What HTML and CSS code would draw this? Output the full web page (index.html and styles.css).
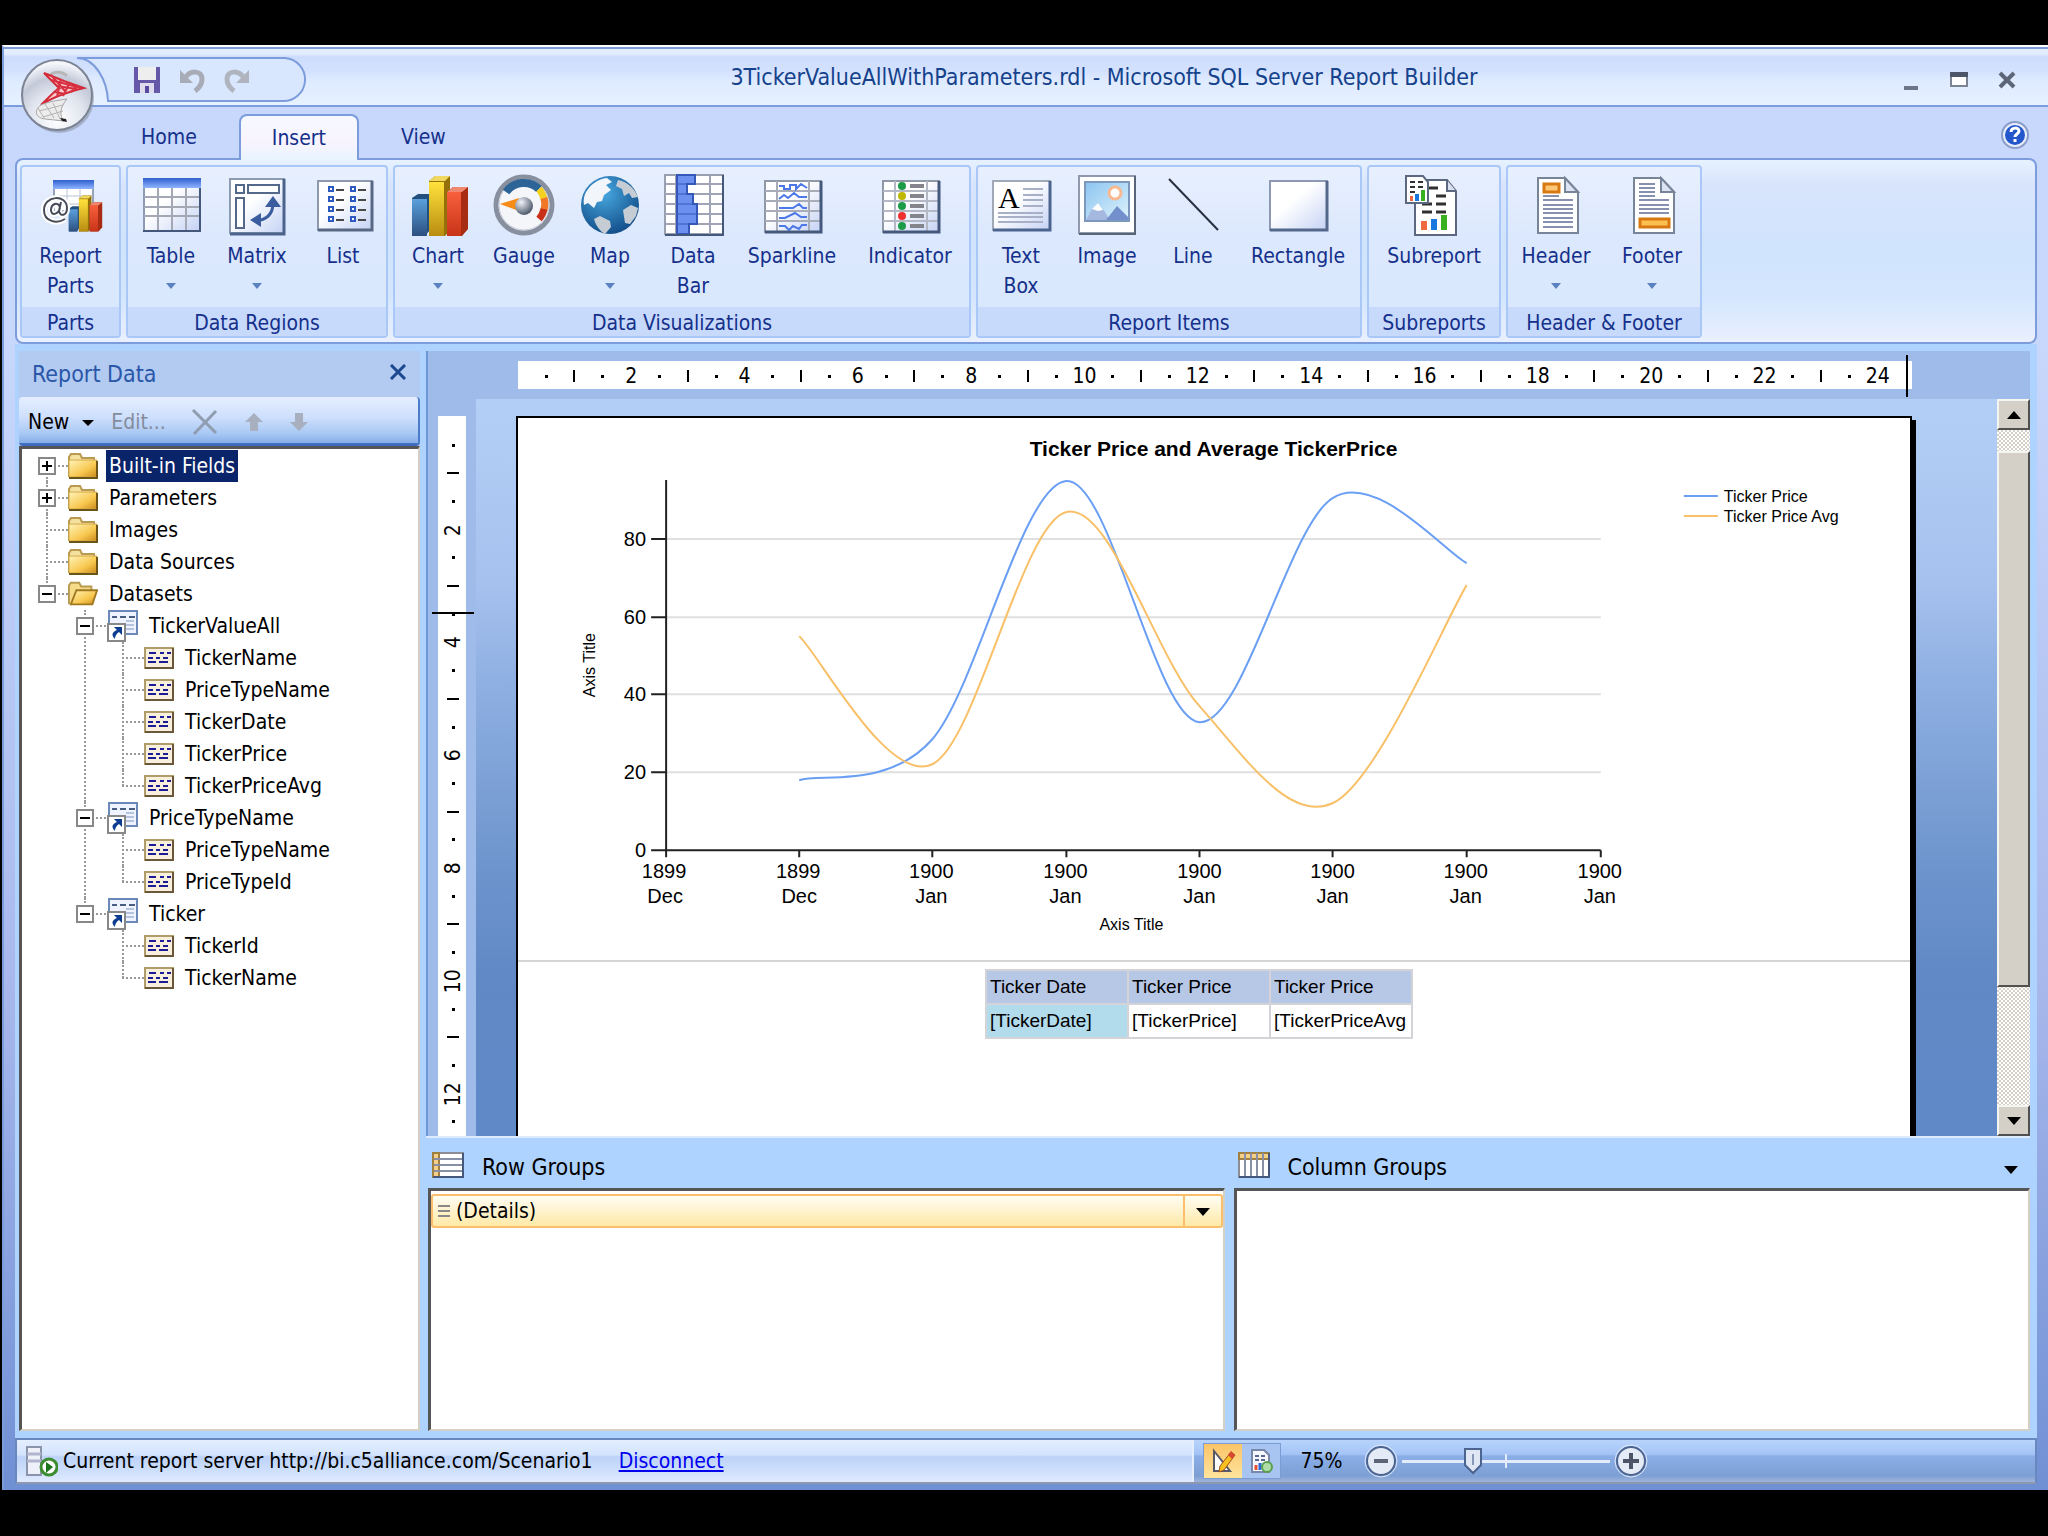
FILE: index.html
```
<!DOCTYPE html>
<html lang="en">
<head>
    <meta charset="UTF-8">
    <meta name="viewport" content="width=device-width, initial-scale=1.0">
    <title>3TickerValueAllWithParameters.rdl - Microsoft SQL Server Report Builder</title>
    <link rel="stylesheet" href="styles.css">
</head>
<body>
    <!-- shared icons -->
    <svg class="defs" aria-hidden="true">
        <defs>
            <linearGradient id="g-blue" x1="0" y1="0" x2="0" y2="1"><stop offset="0" stop-color="#5aa0dc"/><stop offset="1" stop-color="#2c4f80"/></linearGradient>
            <linearGradient id="g-yellow" x1="0" y1="0" x2="0" y2="1"><stop offset="0" stop-color="#ffe23c"/><stop offset="1" stop-color="#b88c10"/></linearGradient>
            <linearGradient id="g-red" x1="0" y1="0" x2="0" y2="1"><stop offset="0" stop-color="#f8603c"/><stop offset="1" stop-color="#c83418"/></linearGradient>
            <linearGradient id="g-head" x1="0" y1="0" x2="0" y2="1"><stop offset="0" stop-color="#2f5fd0"/><stop offset="1" stop-color="#8fb4ff"/></linearGradient>
            <linearGradient id="g-paper" x1="0" y1="0" x2="1" y2="1"><stop offset="0.4" stop-color="#ffffff"/><stop offset="1" stop-color="#c4d2f4"/></linearGradient>
            <linearGradient id="g-folder" x1="0" y1="0" x2="1" y2="1"><stop offset="0" stop-color="#fff3b8"/><stop offset="0.6" stop-color="#f8c850"/><stop offset="1" stop-color="#c88a18"/></linearGradient>
            <linearGradient id="g-sky" x1="0" y1="0" x2="1" y2="1"><stop offset="0" stop-color="#8cc4f0"/><stop offset="1" stop-color="#dff4fc"/></linearGradient>
            <radialGradient id="g-orb" cx="0.5" cy="0.85" r="0.8"><stop offset="0" stop-color="#ffffff"/><stop offset="0.5" stop-color="#dfe4ee"/><stop offset="0.75" stop-color="#c3c9d8"/><stop offset="1" stop-color="#f4f6fa"/></radialGradient>
            <radialGradient id="g-globe" cx="0.4" cy="0.3" r="0.8"><stop offset="0" stop-color="#48a8e0"/><stop offset="1" stop-color="#0c4480"/></radialGradient>
            <radialGradient id="g-ball" cx="0.35" cy="0.3" r="0.8"><stop offset="0" stop-color="#f0f4fa"/><stop offset="1" stop-color="#3a4658"/></radialGradient>
            <symbol id="i-folder" viewBox="0 0 30 26">
                <path d="M1 24V4l2-3h9l2 4h12v4" fill="#f6e2a0" stroke="#b89a50" stroke-width="2"/>
                <path d="M1 7h28v17H1z" fill="url(#g-folder)" stroke="#d0a848" stroke-width="1"/>
                <path d="M29 8v17H1" fill="none" stroke="#6c5418" stroke-width="2"/>
            </symbol>
            <symbol id="i-folder-open" viewBox="0 0 32 26">
                <path d="M1 24V4l2-3h9l2 4h11v5" fill="#f6dc88" stroke="#b89a50" stroke-width="2"/>
                <path d="M3 24l6-15h22l-5 15z" fill="url(#g-folder)" stroke="#a07820" stroke-width="2"/>
            </symbol>
            <symbol id="i-dataset" viewBox="0 0 32 32">
                <path d="M3 1h28v23H3z" fill="#eef3ff" stroke="#6a88b8" stroke-width="2"/>
                <path d="M6 7h5m3 0h6m3 0h6" stroke="#4a5e84" stroke-width="2"/>
                <path d="M20 11h8M20 15h8M20 19h8" stroke="#b4c4e0" stroke-width="2"/>
                <path d="M2 14h17v17H2z" fill="#fff" stroke="#888" stroke-width="2"/>
                <path d="M8 17h8v8l-3-3c-3 2-4 4-4 7-4-4-3-7 2-9z" fill="#0c3c90"/>
            </symbol>
            <symbol id="i-field" viewBox="0 0 30 22">
                <path d="M1 1h28v20H1z" fill="#f8f0dc" stroke="#b09c68" stroke-width="2"/>
                <path d="M29 1v20H1" fill="none" stroke="#6c5838" stroke-width="2"/>
                <path d="M5 6h7m4 0h4m3 0h4M4 11h5m3 0h4m3 0h5M4 15h8m3 0h9" stroke="#1c1c98" stroke-width="2"/>
            </symbol>
            <symbol id="i-bars" viewBox="0 0 58 62">
                <path d="M1 23l6-4h12v36l-5 6H1z" fill="#24507e"/><path d="M1 24h15v37H1z" fill="url(#g-blue)"/>
                <path d="M18 6l6-5h15v54l-5 6H18z" fill="#937008"/><path d="M18 7h15v54H18z" fill="url(#g-yellow)"/><path d="M18 6l6-5h15l-5 5z" fill="#f0d860"/>
                <path d="M36 17l6-5h15v42l-6 7H36z" fill="#a82c14"/><path d="M36 17h14v44H36z" fill="url(#g-red)"/><path d="M36 17l6-5h15l-6 5z" fill="#f08870"/>
            </symbol>
        </defs>
    </svg>

    <div class="window">
        <header class="titlebar">
            <button class="orb" type="button" aria-label="Report Builder menu">
                <svg viewBox="0 0 74 76" width="74" height="76">
                    <circle cx="38" cy="40" r="35" fill="#8c96a8" opacity="0.6"/>
                    <circle cx="36" cy="37" r="35" fill="url(#g-orb)" stroke="#7c8494" stroke-width="2"/>
                    <path d="M28 18c6-6 14-4 18 0" fill="none" stroke="#b8b8b8" stroke-width="3"/>
                    <path d="M23 15l20 8 20 7c-12 3-30 8-43 17 10-10 17-17 18-17-4-4-9-9-15-15z" fill="#f6c8cc" stroke="#d42a38" stroke-width="2"/>
                    <path d="M30 17l14 16M40 21l-4 18M49 24l-7 14M56 27l-6 7M30 22l30 8M36 28l20 3M34 34l10 2" stroke="#d83040" stroke-width="2"/>
                    <path d="M20 47c-8 6-5 13 4 14l19 2c-5-5-4-14 3-22-8 1-20 3-26 6z" fill="#ececec" stroke="#a4a4a4" stroke-width="1"/>
                    <path d="M17 50l6 10M24 46l9 14M32 45l7 16M18 53l24-6M22 59l20-6" stroke="#b4b4b4" stroke-width="1"/>
                    <path d="M39 60l6 1 1 3-5-1z" fill="#222"/>
                </svg>
            </button>
            <div class="quick">
                <svg class="quick-shape" viewBox="0 0 230 46" width="230" height="46" preserveAspectRatio="none">
                    <path d="M0 1c18 0 30 22 31 43h174a21 21 0 0 0 3-43z" fill="#d8e6fe" stroke="#7c9cdc" stroke-width="2"/>
                </svg>
                <button type="button" aria-label="Save">
                    <svg viewBox="0 0 28 28" width="28" height="28"><path d="M1 1h26v26H1z" fill="#6658a8"/><path d="M5 1h18v13H5z" fill="#eee"/><path d="M7 17h14v10H7z" fill="#dcdcec"/><path d="M12 20h4v7h-4z" fill="#5848a0"/></svg>
                </button>
                <button type="button" aria-label="Undo">
                    <svg viewBox="0 0 28 28" width="28" height="28"><path d="M7 12c5-8 17-8 17 1 0 6-3 9-7 12" fill="none" stroke="#a8acb6" stroke-width="5"/><path d="M2 4v13h13z" fill="#a8acb6"/></svg>
                </button>
                <button type="button" aria-label="Redo">
                    <svg viewBox="0 0 28 28" width="28" height="28"><path d="M21 12c-5-8-17-8-17 1 0 6 3 9 7 12" fill="none" stroke="#b0b4be" stroke-width="5"/><path d="M26 4v13H13z" fill="#b0b4be"/></svg>
                </button>
            </div>
            <h1>3TickerValueAllWithParameters.rdl - Microsoft SQL Server Report Builder</h1>
            <div class="window-buttons">
                <button type="button" aria-label="Minimize"><svg viewBox="0 0 20 20" width="20" height="20"><path d="M3 16h14v4H3z" fill="#6c7688"/></svg></button>
                <button type="button" aria-label="Maximize"><svg viewBox="0 0 20 20" width="20" height="20"><path d="M2 4h16v12H2z" fill="#fff" stroke="#7c8494" stroke-width="2"/><path d="M1 2h18v5H1z" fill="#4c5668"/></svg></button>
                <button type="button" aria-label="Close"><svg viewBox="0 0 20 20" width="20" height="20"><path d="M3 3l14 14M17 3L3 17" stroke="#5c6678" stroke-width="4"/></svg></button>
            </div>
        </header>

        <nav class="tabs">
            <button class="tab" type="button">Home</button>
            <button class="tab active" type="button">Insert</button>
            <button class="tab" type="button">View</button>
            <button class="help" type="button" aria-label="Help">
                <svg viewBox="0 0 28 28" width="28" height="28"><circle cx="14" cy="14" r="13" fill="#e8eefc" stroke="#8a9cc8" stroke-width="2"/><circle cx="14" cy="14" r="10" fill="#2456cc"/><path d="M10 11c0-5 8-5 8-1 0 3-4 3-4 6M14 18v3" fill="none" stroke="#fff" stroke-width="3"/></svg>
            </button>
        </nav>

        <div class="ribbon">
            <section class="group">
                <div class="tools">
                    <button class="tool w-parts" type="button">
                        <svg viewBox="0 0 64 64" width="64" height="64">
                            <path d="M15 7h39v30H15z" fill="#fff" stroke="#94a2bc" stroke-width="2"/><path d="M14 6h41v9H14z" fill="url(#g-head)"/><path d="M15 22h39M15 30h39M28 15v22M41 15v22" stroke="#b8c2d4"/>
                            <svg x="28" y="21" width="37" height="37"><use href="#i-bars" width="37" height="37"/></svg>
                            <path d="M26 45c-8 5-21 3-21-9 0-15 23-16 23-2 0 8-7 9-8 3l2-9M21 33c-2-6-9-3-9 3s7 5 9-2" fill="none" stroke="#fff" stroke-width="6"/>
                            <path d="M26 45c-8 5-21 3-21-9 0-15 23-16 23-2 0 8-7 9-8 3l2-9M21 33c-2-6-9-3-9 3s7 5 9-2" fill="none" stroke="#484c58" stroke-width="2"/>
                        </svg>
                        <span>Report<br>Parts</span>
                    </button>
                </div>
                <h2>Parts</h2>
            </section>

            <section class="group">
                <div class="tools">
                    <button class="tool" type="button">
                        <svg viewBox="0 0 64 64" width="64" height="64">
                            <path d="M5 5h56v52H5z" fill="url(#g-paper)" stroke="#8c9ab4" stroke-width="2"/><path d="M4 4h58v10H4z" fill="url(#g-head)"/><path d="M5 23h56M5 33h56M5 42h56M19 14v42M33 14v42M47 14v42" stroke="#a4a8b4" stroke-width="2"/><path d="M61 14v43H4" fill="none" stroke="#44587c" stroke-width="2"/>
                        </svg>
                        <span>Table</span><i class="drop"></i>
                    </button>
                    <button class="tool" type="button">
                        <svg viewBox="0 0 64 64" width="64" height="64">
                            <path d="M5 5h54v54H5z" fill="url(#g-paper)" stroke="#8c9ab4" stroke-width="2"/><path d="M59 5v55H5" fill="none" stroke="#4c648c" stroke-width="3"/>
                            <path d="M11 11h8v8h-8zM23 11h31v8H23zM11 24h8v30h-8z" fill="#fff" stroke="#54688c" stroke-width="2"/>
                            <path d="M30 47c12-1 18-7 18-18" fill="none" stroke="#3c5ca0" stroke-width="3"/><path d="M48 22l8 11H40zM25 46l11-7v14z" fill="#3c5ca0"/>
                        </svg>
                        <span>Matrix</span><i class="drop"></i>
                    </button>
                    <button class="tool" type="button">
                        <svg viewBox="0 0 64 64" width="64" height="64">
                            <path d="M7 7h54v49H7z" fill="url(#g-paper)" stroke="#8c98ac" stroke-width="2"/><path d="M61 7v49H7" fill="none" stroke="#586884" stroke-width="3"/>
                            <path d="M18 13h4v4h-4zM40 13h4v4h-4zM18 23h4v4h-4zM40 23h4v4h-4zM18 33h4v4h-4zM40 33h4v4h-4zM18 43h4v4h-4zM40 43h4v4h-4z" fill="#fff" stroke="#2c5ac0" stroke-width="2"/>
                            <path d="M25 16h8M47 16h8M25 26h8M47 26h8M25 36h8M47 36h8M25 46h8M47 46h8" stroke="#484848" stroke-width="2"/>
                        </svg>
                        <span>List</span>
                    </button>
                </div>
                <h2>Data Regions</h2>
            </section>

            <section class="group">
                <div class="tools">
                    <button class="tool" type="button">
                        <svg viewBox="0 0 64 64" width="64" height="64"><use href="#i-bars" x="5" y="1" width="58" height="62"/></svg>
                        <span>Chart</span><i class="drop"></i>
                    </button>
                    <button class="tool" type="button">
                        <svg viewBox="0 0 64 64" width="64" height="64">
                            <circle cx="32" cy="31" r="28" fill="#f4f6fa" stroke="#8890a0" stroke-width="5"/><circle cx="32" cy="31" r="25" fill="none" stroke="#c8ccd8" stroke-width="1"/>
                            <path d="M14 18a22 22 0 0 1 33-3" fill="none" stroke="#2c6498" stroke-width="8"/>
                            <path d="M47 15a22 22 0 0 1 5 10" fill="none" stroke="#f4d020" stroke-width="7"/><path d="M52 24a22 22 0 0 1 0 12" fill="none" stroke="#f07828" stroke-width="7"/><path d="M52 35a22 22 0 0 1-5 10" fill="none" stroke="#c83018" stroke-width="7"/>
                            <path d="M8 30l19-6v13z" fill="#f88c18"/><circle cx="32" cy="32" r="9" fill="url(#g-ball)"/>
                        </svg>
                        <span>Gauge</span>
                    </button>
                    <button class="tool" type="button">
                        <svg viewBox="0 0 64 64" width="64" height="64">
                            <circle cx="32" cy="31" r="29" fill="url(#g-globe)"/>
                            <path d="M8 18c5-8 12-13 21-14l5 4-6 3 5 5-7 5-2 6-5 1-3 6-6-5-4 2c-1-5 0-9 2-13z" fill="#f2f6fa"/>
                            <path d="M16 45l6-3 10 5 1 6-6 7c-5-3-9-8-11-15zM40 6c10 2 16 8 20 17l-6 1-3-5-5 3-2-7-6-3zM45 36l8-5 7 3-2 8-6 8-5-1z" fill="#c6ccd4"/>
                        </svg>
                        <span>Map</span><i class="drop"></i>
                    </button>
                    <button class="tool w-data" type="button">
                        <svg viewBox="0 0 64 64" width="64" height="64">
                            <path d="M4 1h58v59H4z" fill="#fff" stroke="#98a0b0" stroke-width="2"/><path d="M4 10h58M4 20h58M4 30h58M4 40h58M4 50h58M15 1v59M49 1v59" stroke="#a0a4b4" stroke-width="2"/>
                            <path d="M16 1h18v9h-8v10h6v10h4v20h-8v10H16z" fill="#6c90f0" stroke="#3458b8" stroke-width="2"/><path d="M16 10h10M16 20h10M16 30h16M16 40h20M16 50h12" stroke="#3458b8"/><path d="M62 1v60H4" fill="none" stroke="#44587c" stroke-width="2"/>
                        </svg>
                        <span>Data<br>Bar</span>
                    </button>
                    <button class="tool w-wide" type="button">
                        <svg viewBox="0 0 64 64" width="64" height="64">
                            <path d="M5 7h56v51H5z" fill="url(#g-paper)" stroke="#9098a8" stroke-width="2"/><path d="M5 17h56M5 27h56M5 37h56M5 47h56M17 7v51M49 7v51" stroke="#a8acb8" stroke-width="2"/>
                            <path d="M19 12h5v3h6v-4h6v4l5-5 6 4M19 25l5-4 4 3 6-5 5 4h8M19 34h14l6-4 4 4h4M19 44h6l10-5 6 4h6M19 52h6l4 4 4-4 6 3 3-4h5" fill="none" stroke="#4c78e8" stroke-width="2"/><path d="M61 7v51H5" fill="none" stroke="#44587c" stroke-width="3"/>
                        </svg>
                        <span>Sparkline</span>
                    </button>
                    <button class="tool w-wide" type="button">
                        <svg viewBox="0 0 64 64" width="64" height="64">
                            <path d="M5 7h56v51H5z" fill="url(#g-paper)" stroke="#9098a8" stroke-width="2"/><path d="M5 17h56M5 27h56M5 37h56M5 47h56M17 7v51M49 7v51" stroke="#b4b8c4" stroke-width="2"/>
                            <path d="M32 12h14M32 22h14M32 32h14M32 42h14M32 52h14" stroke="#84848c" stroke-width="4"/>
                            <g fill="#1c9c48"><circle cx="24" cy="12" r="4"/><circle cx="24" cy="32" r="4"/><circle cx="24" cy="52" r="4"/></g><circle cx="24" cy="22" r="4" fill="#c0b800"/><circle cx="24" cy="42" r="4" fill="#f03030"/><path d="M61 7v51H5" fill="none" stroke="#44587c" stroke-width="3"/>
                        </svg>
                        <span>Indicator</span>
                    </button>
                </div>
                <h2>Data Visualizations</h2>
            </section>

            <section class="group">
                <div class="tools">
                    <button class="tool" type="button">
                        <svg viewBox="0 0 64 64" width="64" height="64">
                            <path d="M4 7h57v49H4z" fill="url(#g-paper)" stroke="#a0a8b8" stroke-width="2"/><path d="M61 7v49H4" fill="none" stroke="#4c6490" stroke-width="3"/>
                            <path d="M34 15h20M34 21h20M34 26h20M34 32h20M9 39h45M9 43h45M9 48h45" stroke="#a8b0c8" stroke-width="2"/>
                            <text class="glyph-a" x="9" y="34">A</text>
                        </svg>
                        <span>Text<br>Box</span>
                    </button>
                    <button class="tool" type="button">
                        <svg viewBox="0 0 64 64" width="64" height="64">
                            <path d="M4 2h56v57H4z" fill="#fff" stroke="#909aac" stroke-width="2"/><path d="M60 2v58H4" fill="none" stroke="#586478" stroke-width="2"/>
                            <path d="M10 8h44v39H10z" fill="url(#g-sky)" stroke="#7c98bc" stroke-width="2"/><circle cx="40" cy="19" r="6" fill="#fff" stroke="#f8b890" stroke-width="3"/>
                            <path d="M11 46l6-11 6-6 7 9 5 8z" fill="#a4b8e0"/><path d="M31 46l11-14 11 11v3z" fill="#7490cc"/><path d="M17 35l6-6 5 7-5 1z" fill="#fff"/>
                        </svg>
                        <span>Image</span>
                    </button>
                    <button class="tool" type="button">
                        <svg viewBox="0 0 64 64" width="64" height="64"><path d="M8 5l49 51" stroke="#283040" stroke-width="2"/></svg>
                        <span>Line</span>
                    </button>
                    <button class="tool w-rect" type="button">
                        <svg viewBox="0 0 64 64" width="64" height="64"><path d="M4 7h57v49H4z" fill="url(#g-paper)" stroke="#8c98b4" stroke-width="2"/><path d="M61 7v49H4" fill="none" stroke="#54688c" stroke-width="3"/></svg>
                        <span>Rectangle</span>
                    </button>
                </div>
                <h2>Report Items</h2>
            </section>

            <section class="group">
                <div class="tools">
                    <button class="tool w-sub" type="button">
                        <svg viewBox="0 0 64 64" width="64" height="64">
                            <path d="M13 6h32l9 11v44H13z" fill="#fff" stroke="#5c6880" stroke-width="2"/><path d="M45 6v11h9" fill="#d8e0f0" stroke="#5c6880" stroke-width="2"/>
                            <path d="M27 14h9M34 22h10M34 30h10M20 38h10M34 38h10M20 30h10" stroke="#303030" stroke-width="3"/>
                            <path d="M19 47h6v9h-6z" fill="#f06840"/><path d="M29 45h6v11h-6z" fill="#1878e0"/><path d="M39 41h6v15h-6z" fill="#38b020"/>
                            <path d="M4 2h17l5 6v21H4z" fill="#fff" stroke="#5c6880" stroke-width="2"/><path d="M8 8h5m3 0h5M8 13h5m3 0h5M8 18h5" stroke="#303030" stroke-width="2"/>
                            <path d="M8 22h3v5H8z" fill="#f06840"/><path d="M13 20h4v7h-4z" fill="#1878e0"/><path d="M19 16h4v11h-4z" fill="#38b020"/>
                        </svg>
                        <span>Subreport</span>
                    </button>
                </div>
                <h2>Subreports</h2>
            </section>

            <section class="group">
                <div class="tools">
                    <button class="tool w-foot" type="button">
                        <svg viewBox="0 0 64 64" width="64" height="64">
                            <path d="M14 4h27l13 14v41H14z" fill="#fff" stroke="#788498" stroke-width="2"/><path d="M41 4v14h13z" fill="#dce4f4" stroke="#788498" stroke-width="2"/>
                            <path d="M19 22h16M19 26h30M19 31h30M19 35h30M19 39h30M19 44h30M19 48h30M19 53h30" stroke="#8890b0" stroke-width="2"/><path d="M20 10h15v8H20z" fill="#fcc878" stroke="#d87810" stroke-width="3"/>
                        </svg>
                        <span>Header</span><i class="drop"></i>
                    </button>
                    <button class="tool w-foot" type="button">
                        <svg viewBox="0 0 64 64" width="64" height="64">
                            <path d="M14 4h27l13 14v41H14z" fill="#fff" stroke="#788498" stroke-width="2"/><path d="M41 4v14h13z" fill="#dce4f4" stroke="#788498" stroke-width="2"/>
                            <path d="M19 10h16M19 14h16M19 18h16M19 22h16M19 26h30M19 31h30M19 35h30M19 39h30" stroke="#8890b0" stroke-width="2"/><path d="M20 45h29v8H20z" fill="#fcc050" stroke="#d87810" stroke-width="3"/>
                        </svg>
                        <span>Footer</span><i class="drop"></i>
                    </button>
                </div>
                <h2>Header &amp; Footer</h2>
            </section>
        </div>

        <main class="content">
            <aside class="report-data">
                <div class="panel-title">
                    <h2>Report Data</h2>
                    <button type="button" aria-label="Close panel"><svg viewBox="0 0 18 16" width="18" height="16"><path d="M2 1l14 14M16 1L2 15" stroke="#1c4890" stroke-width="3"/></svg></button>
                </div>
                <div class="panel-tools">
                    <button type="button">New<i class="arrow"></i></button>
                    <button type="button" disabled>Edit...</button>
                    <button type="button" aria-label="Delete" disabled><svg viewBox="0 0 28 28" width="28" height="28"><path d="M2 2l23 23M25 3L3 26" stroke="#909cb0" stroke-width="3"/></svg></button>
                    <button type="button" aria-label="Move up" disabled><svg viewBox="0 0 20 20" width="20" height="20"><path d="M10 1l9 9h-5v9H6v-9H1z" fill="#a8b0c0"/></svg></button>
                    <button type="button" aria-label="Move down" disabled><svg viewBox="0 0 20 20" width="20" height="20"><path d="M10 19l9-9h-5V1H6v9H1z" fill="#a8b0c0"/></svg></button>
                </div>
                <div class="tree">
                    <ul>
                        <li><div class="row"><button class="toggle closed" type="button" aria-label="Expand Built-in Fields"></button><svg class="folder"><use href="#i-folder"/></svg><span class="selected">Built-in Fields</span></div></li>
                        <li><div class="row"><button class="toggle closed" type="button" aria-label="Expand Parameters"></button><svg class="folder"><use href="#i-folder"/></svg><span>Parameters</span></div></li>
                        <li><div class="row leaf"><svg class="folder"><use href="#i-folder"/></svg><span>Images</span></div></li>
                        <li><div class="row leaf"><svg class="folder"><use href="#i-folder"/></svg><span>Data Sources</span></div></li>
                        <li><div class="row"><button class="toggle" type="button" aria-label="Collapse Datasets"></button><svg class="folder"><use href="#i-folder-open"/></svg><span>Datasets</span></div>
                            <ul>
                                <li><div class="row"><button class="toggle" type="button" aria-label="Collapse TickerValueAll"></button><svg class="dataset"><use href="#i-dataset"/></svg><span>TickerValueAll</span></div>
                                    <ul>
                                        <li><div class="row leaf"><svg class="field"><use href="#i-field"/></svg><span>TickerName</span></div></li>
                                        <li><div class="row leaf"><svg class="field"><use href="#i-field"/></svg><span>PriceTypeName</span></div></li>
                                        <li><div class="row leaf"><svg class="field"><use href="#i-field"/></svg><span>TickerDate</span></div></li>
                                        <li><div class="row leaf"><svg class="field"><use href="#i-field"/></svg><span>TickerPrice</span></div></li>
                                        <li><div class="row leaf"><svg class="field"><use href="#i-field"/></svg><span>TickerPriceAvg</span></div></li>
                                    </ul>
                                </li>
                                <li><div class="row"><button class="toggle" type="button" aria-label="Collapse PriceTypeName"></button><svg class="dataset"><use href="#i-dataset"/></svg><span>PriceTypeName</span></div>
                                    <ul>
                                        <li><div class="row leaf"><svg class="field"><use href="#i-field"/></svg><span>PriceTypeName</span></div></li>
                                        <li><div class="row leaf"><svg class="field"><use href="#i-field"/></svg><span>PriceTypeId</span></div></li>
                                    </ul>
                                </li>
                                <li><div class="row"><button class="toggle" type="button" aria-label="Collapse Ticker"></button><svg class="dataset"><use href="#i-dataset"/></svg><span>Ticker</span></div>
                                    <ul>
                                        <li><div class="row leaf"><svg class="field"><use href="#i-field"/></svg><span>TickerId</span></div></li>
                                        <li><div class="row leaf"><svg class="field"><use href="#i-field"/></svg><span>TickerName</span></div></li>
                                    </ul>
                                </li>
                            </ul>
                        </li>
                    </ul>
                </div>
            </aside>

            <div class="designer">
                <div class="workspace">
                    <div class="ruler-x">
                        <div class="scale">
                            <i></i><b></b><i></i><span>2</span><i></i><b></b><i></i><span>4</span>
                            <i></i><b></b><i></i><span>6</span><i></i><b></b><i></i><span>8</span>
                            <i></i><b></b><i></i><span>10</span><i></i><b></b><i></i><span>12</span>
                            <i></i><b></b><i></i><span>14</span><i></i><b></b><i></i><span>16</span>
                            <i></i><b></b><i></i><span>18</span><i></i><b></b><i></i><span>20</span>
                            <i></i><b></b><i></i><span>22</span><i></i><b></b><i></i><span>24</span>
                        </div>
                    </div>
                    <div class="ruler-y">
                        <div class="scale">
                            <i></i><b></b><i></i><span>2</span><i></i><b></b><i></i><span>4</span>
                            <i></i><b></b><i></i><span>6</span><i></i><b></b><i></i><span>8</span>
                            <i></i><b></b><i></i><span>10</span><i></i><b></b><i></i><span>12</span><i></i>
                        </div>
                    </div>
                    <div class="canvas">
                        <div class="page">
                            <svg class="chart" viewBox="519 417 1391 542">
                                <text class="chart-title" x="1214" y="455">Ticker Price and Average TickerPrice</text>
                                <path class="grid" d="M667 538h934M667 616h934M667 693h934M667 771h934"/>
                                <path class="axis" d="M667 479v377M652 849h949M652 538h15M652 616h15M652 693h15M652 771h15M800 849v7M933 849v7M1067 849v7M1200 849v7M1333 849v7M1467 849v7M1601 849v7"/>
                                <path class="line-price" d="M800 779C822 772 889 788 933 738C977 688 1023 483 1067 480C1111 477 1156 718 1200 721C1244 724 1289 524 1333 497C1377 470 1445 551 1467 562"/>
                                <path class="line-avg" d="M800 635C822 656 889 784 933 763C977 742 1023 521 1067 511C1111 501 1156 656 1200 705C1244 754 1289 822 1333 802C1377 782 1445 620 1467 584"/>
                                <g class="labels-y"><text x="647" y="545">80</text><text x="647" y="623">60</text><text x="647" y="700">40</text><text x="647" y="778">20</text><text x="647" y="856">0</text></g>
                                <g class="labels-x">
                                    <text x="665" y="877">1899</text><text x="666" y="902">Dec</text>
                                    <text x="799" y="877">1899</text><text x="800" y="902">Dec</text>
                                    <text x="932" y="877">1900</text><text x="932" y="902">Jan</text>
                                    <text x="1066" y="877">1900</text><text x="1066" y="902">Jan</text>
                                    <text x="1200" y="877">1900</text><text x="1200" y="902">Jan</text>
                                    <text x="1333" y="877">1900</text><text x="1333" y="902">Jan</text>
                                    <text x="1466" y="877">1900</text><text x="1466" y="902">Jan</text>
                                    <text x="1600" y="877">1900</text><text x="1600" y="902">Jan</text>
                                </g>
                                <text class="axis-title" x="1132" y="929">Axis Title</text>
                                <text class="axis-title" transform="translate(596 664) rotate(-90)">Axis Title</text>
                                <path class="line-price" d="M1684 495h34"/><path class="line-avg" d="M1684 515h34"/>
                                <text class="legend" x="1724" y="501">Ticker Price</text><text class="legend" x="1724" y="521">Ticker Price Avg</text>
                            </svg>
                            <table class="tablix">
                                <tr><th>Ticker Date</th><th>Ticker Price</th><th>Ticker Price</th></tr>
                                <tr><td class="current">[TickerDate]</td><td>[TickerPrice]</td><td>[TickerPriceAvg</td></tr>
                            </table>
                        </div>
                    </div>
                    <div class="scrollbar">
                        <button type="button" aria-label="Scroll up"><i class="arrow up"></i></button>
                        <div class="track"><div class="thumb"></div></div>
                        <button type="button" aria-label="Scroll down"><i class="arrow"></i></button>
                    </div>
                </div>

                <div class="groups">
                    <section class="group-pane">
                        <div class="pane-title">
                            <svg viewBox="0 0 32 26" width="32" height="26"><path d="M1 1h30v24H1z" fill="#fff" stroke="#8c8c94" stroke-width="2"/><path d="M1 1h6v24H1z" fill="#f4d088" stroke="#a08040" stroke-width="2"/><path d="M7 7h24M7 13h24M7 19h24M2 7h5M2 13h5M2 19h5" stroke="#8890a8" stroke-width="2"/><path d="M31 1v24H1" fill="none" stroke="#44587c" stroke-width="2"/></svg>
                            <h2>Row Groups</h2>
                        </div>
                        <div class="pane-box">
                            <div class="details">
                                <svg viewBox="0 0 14 14" width="14" height="14"><path d="M1 2h12M1 7h12M1 12h12" stroke="#888" stroke-width="2"/></svg>
                                <span>(Details)</span>
                                <button type="button" aria-label="Details menu"><i class="arrow"></i></button>
                            </div>
                        </div>
                    </section>
                    <section class="group-pane">
                        <div class="pane-title">
                            <svg viewBox="0 0 32 26" width="32" height="26"><path d="M1 1h30v24H1z" fill="#fff" stroke="#8c8c94" stroke-width="2"/><path d="M1 1h30v6H1z" fill="#f4d088" stroke="#a08040" stroke-width="2"/><path d="M7 1v24M13 1v24M19 1v24M25 1v24" stroke="#8890a8" stroke-width="2"/><path d="M31 1v24H1" fill="none" stroke="#44587c" stroke-width="2"/></svg>
                            <h2>Column Groups</h2>
                            <button type="button" aria-label="Column groups menu"><i class="arrow"></i></button>
                        </div>
                        <div class="pane-box"></div>
                    </section>
                </div>
            </div>
        </main>

        <footer class="status">
            <div class="status-server">
                <svg viewBox="0 0 32 32" width="32" height="32"><path d="M1 2h14v28H1z" fill="#eef0fa" stroke="#8c94ac" stroke-width="2"/><path d="M1 9h14M1 16h14" stroke="#b0b4cc" stroke-width="3"/><circle cx="23" cy="22" r="8" fill="#fff" stroke="#3c8c30" stroke-width="3"/><path d="M20 17l7 5-7 6z" fill="#1c7418"/></svg>
                <span>Current report server http://bi.c5alliance.com/Scenario1</span>
                <a href="#">Disconnect</a>
            </div>
            <div class="status-zoom">
                <div class="views">
                    <button class="active" type="button" aria-label="Design"><svg viewBox="0 0 26 26" width="26" height="26"><path d="M4 3v20h16z" fill="#fff" stroke="#585868" stroke-width="2"/><path d="M21 4l4 3-11 15-5 2 1-6z" fill="#f8c020" stroke="#a05018"/><path d="M21 3l4 4-3 4-4-4z" fill="#d84830"/></svg></button>
                    <button type="button" aria-label="Run"><svg viewBox="0 0 26 26" width="26" height="26"><path d="M4 2h12l5 5v17H4z" fill="#f6f8fe" stroke="#7888a8" stroke-width="2"/><path d="M7 8h4m2 0h4M7 12h4m2 0h4" stroke="#586890" stroke-width="2"/><path d="M8 17v5" stroke="#e85030" stroke-width="3"/><path d="M12 15v7" stroke="#2868d8" stroke-width="3"/><circle cx="19" cy="19" r="5" fill="#b0dca8" stroke="#58a050" stroke-width="2"/></svg></button>
                </div>
                <label for="zoom">75%</label>
                <button class="round" type="button" aria-label="Zoom out"><svg viewBox="0 0 34 34" width="34" height="34"><circle cx="17" cy="17" r="14" fill="#e4eaf6" stroke="#4c6490" stroke-width="2"/><circle cx="17" cy="17" r="16" fill="none" stroke="#dfe8fa"/><path d="M10 15h14v4H10z" fill="#5c6478"/></svg></button>
                <input id="zoom" type="range" min="10" max="210" value="75">
                <button class="round" type="button" aria-label="Zoom in"><svg viewBox="0 0 34 34" width="34" height="34"><circle cx="17" cy="17" r="14" fill="#e4eaf6" stroke="#4c6490" stroke-width="2"/><circle cx="17" cy="17" r="16" fill="none" stroke="#dfe8fa"/><path d="M9 15h6V9h4v6h6v4h-6v6h-4v-6H9z" fill="#4c5468"/></svg></button>
            </div>
        </footer>
    </div>
</body>
</html>
```
FILE: styles.css
```
* {
    box-sizing: border-box;
}
body {
    margin: 0;
    padding: 45px 0 46px;
    min-height: 100vh;
    display: flex;
    background-color: #000;
    color: #000;
    font-family: 'DejaVu Sans Condensed', Tahoma, 'Noto Sans', sans-serif;
    font-size: 21px;
    line-height: 30px;
}
h1,
h2 {
    margin: 0;
    font-size: 23px;
    font-weight: normal;
}
button {
    padding: 0;
    border: none;
    background: none;
    color: inherit;
    font: inherit;
    cursor: pointer;
}
svg {
    display: block;
    flex: none;
}
.defs {
    position: absolute;
    width: 0;
    height: 0;
}
.window {
    flex: 1;
    min-width: 0;
    position: relative;
    display: flex;
    flex-direction: column;
    margin-left: 2px;
    border-top: 2px solid #fff;
    border-left: 2px solid #7c9cdc;
    background: linear-gradient(#c8d8fc 0, #c8d8fc 20%, #a8b8ec 65%, #7090d4 100%);
}

/* title bar */
.titlebar {
    display: flex;
    align-items: center;
    height: 60px;
    border-top: 2px solid #7c9cdc;
    border-bottom: 2px solid #7c9cdc;
    background: linear-gradient(#e6efff 0, #e0eaff 10%, #ccdcfc 14%, #d4e2fe 40%, #deeaff 55%, #e6f2ff 100%);
}
.titlebar h1 {
    flex: 1;
    text-align: center;
    color: #15428b;
}
.orb {
    position: absolute;
    left: 17px;
    top: 11px;
    z-index: 2;
}
.quick {
    position: relative;
    display: flex;
    align-items: center;
    gap: 17px;
    width: 230px;
    height: 46px;
    margin: 6px 0 0 73px;
    padding-left: 56px;
}
.quick-shape {
    position: absolute;
    left: 0;
    top: 0;
}
.quick button {
    position: relative;
}
.window-buttons {
    display: flex;
    gap: 28px;
    padding: 6px 31px 0 0;
}

/* ribbon */
.tabs {
    display: flex;
    align-items: flex-end;
    gap: 9px;
    height: 51px;
    padding: 0 19px 0 104px;
}
.tab {
    height: 44px;
    padding: 0 31px;
    border: 2px solid transparent;
    border-bottom: none;
    border-radius: 8px 8px 0 0;
    color: #15308b;
}
.tab.active {
    position: relative;
    z-index: 1;
    height: 46px;
    margin-bottom: -2px;
    border-color: #7c9cdc;
    background: linear-gradient(#f6f8ff, #f8f4ff 60%, #e8f4ff);
}
.help {
    margin: 0 0 9px auto;
}
.ribbon {
    display: flex;
    gap: 5px;
    margin: 0 11px;
    padding: 5px 3px 4px;
    border: 2px solid #7c9cdc;
    border-radius: 8px;
    background: linear-gradient(#e6f2ff 0, #d8e4fc 14%, #d0e4fd 50%, #d4e6fe 75%, #eaf0fe 100%);
}
.group {
    display: flex;
    flex-direction: column;
    border: 2px solid #a9c8f8;
    border-radius: 4px;
    color: #15308b;
    background: linear-gradient(#e8f0fe, #dce8fd 40%, #d8e8fe);
}
.group h2 {
    height: 29px;
    padding: 0 8px;
    text-align: center;
    font-size: 21px;
    line-height: 32px;
    background-color: #c8dafc;
    white-space: nowrap;
}
.tools {
    display: flex;
    justify-content: center;
    height: 140px;
}
.tool {
    display: flex;
    flex-direction: column;
    align-items: center;
    width: 86px;
    padding-top: 7px;
}
.tool span {
    margin-top: 3px;
}
.tool.w-parts {
    width: 97px;
}
.tool.w-data {
    width: 80px;
}
.tool.w-wide {
    width: 118px;
}
.tool.w-rect {
    width: 124px;
}
.tool.w-sub {
    width: 130px;
}
.tool.w-foot {
    width: 96px;
}
.drop {
    margin-top: 12px;
    border: 5px solid transparent;
    border-top: 6px solid #5a82c0;
    border-bottom: none;
}
.glyph-a {
    font: 30px 'Liberation Serif', serif;
    fill: #000;
}
.arrow {
    display: inline-block;
    border: 7px solid transparent;
    border-top: 8px solid #000;
    border-bottom: none;
}
.arrow.up {
    border-top: none;
    border-bottom: 8px solid #000;
}

/* main area */
.content {
    flex: 1;
    display: flex;
    gap: 6px;
    min-height: 0;
    margin: 0 11px;
    padding: 7px 7px 7px 4px;
    background-color: #aed3fe;
}
.report-data {
    display: flex;
    flex-direction: column;
    width: 401px;
    background-color: #b3caf1;
}
.panel-title {
    display: flex;
    justify-content: space-between;
    align-items: center;
    height: 46px;
    padding: 0 13px;
    color: #2a57a8;
}
.panel-title button {
    margin-bottom: 5px;
}
.panel-tools {
    display: flex;
    align-items: center;
    gap: 17px;
    height: 49px;
    padding: 0 9px;
    border-right: 2px solid #4a7cc8;
    border-radius: 4px;
    background: linear-gradient(#e4eefe 0, #cfe0fd 40%, #a8c8f4 75%, #86aee8 94%, #3c6cc0 95%);
}
.panel-tools .arrow {
    margin: 0 0 3px 13px;
    border-width: 6px 6px 0;
}
.panel-tools button:disabled {
    color: #848c9c;
}
.panel-tools button:nth-child(n+3) {
    margin-left: 8px;
}
.tree {
    flex: 1;
    padding: 1px 0 0 16px;
    border: 3px solid #555;
    border-right: 2px solid #d4d0c8;
    border-bottom: 2px solid #d4d0c8;
    background-color: #fff;
}
.tree ul {
    margin: 0;
    padding: 0;
    list-style: none;
}
.tree ul ul {
    padding-left: 38px;
}
.tree li {
    position: relative;
}
.tree li::before {
    content: "";
    position: absolute;
    left: 8px;
    top: 0;
    bottom: 0;
    border-left: 2px dotted #999;
}
.tree > ul > li:first-child::before {
    top: 16px;
}
.tree li:last-child::before {
    bottom: auto;
    height: 16px;
}
.row {
    position: relative;
    display: flex;
    align-items: center;
    height: 32px;
    padding-left: 30px;
}
.row::before {
    content: "";
    position: absolute;
    left: 8px;
    top: 15px;
    width: 22px;
    border-top: 2px dotted #999;
}
.toggle {
    position: relative;
    flex: none;
    width: 18px;
    height: 18px;
    margin: 0 12px 0 -30px;
    border: 2px solid #888;
    background: linear-gradient(#000, #000) center / 10px 2px no-repeat #fff;
}
.toggle.closed {
    background: linear-gradient(#000, #000) center / 10px 2px no-repeat, linear-gradient(#000, #000) center / 2px 10px no-repeat #fff;
}
.row span {
    margin-left: 8px;
    padding: 0 3px;
}
.row .selected {
    line-height: 32px;
    color: #fff;
    background-color: #0a246a;
}
.folder {
    width: 30px;
    height: 26px;
}
.dataset {
    width: 32px;
    height: 32px;
}
.field {
    width: 30px;
    height: 22px;
}

/* designer */
.designer {
    flex: 1;
    display: flex;
    flex-direction: column;
    min-width: 0;
}
.workspace {
    flex: 1;
    display: grid;
    grid-template-columns: 48px 1fr 33px;
    grid-template-rows: 48px 1fr;
    border-left: 2px solid #6f96d8;
    background-color: #9fbbe9;
}
.scale {
    display: grid;
    background-color: #fff;
}
.scale > * {
    display: flex;
    align-items: center;
    justify-content: center;
}
.scale i::before {
    content: "";
    width: 3px;
    height: 3px;
    background-color: #000;
}
.scale b::before {
    content: "";
    width: 2px;
    height: 12px;
    background-color: #000;
}
.ruler-x {
    grid-column: 1 / -1;
    position: relative;
    padding: 10px 118px 10px 90px;
}
.ruler-x .scale {
    grid-template-columns: repeat(48, 1fr);
    height: 28px;
    padding: 0 20px 0 14px;
}
/* pointer position on the rulers */
.ruler-x::after {
    content: "";
    position: absolute;
    right: 122px;
    top: 4px;
    width: 2px;
    height: 42px;
    background-color: #000;
}
.ruler-y {
    position: relative;
    padding: 17px 10px 0;
}
.ruler-y .scale {
    grid-template-rows: repeat(25, 1fr);
    width: 28px;
    height: 100%;
    padding-top: 15px;
}
.ruler-y span {
    writing-mode: vertical-rl;
    transform: rotate(180deg);
}
.ruler-y b::before {
    width: 12px;
    height: 2px;
}
.ruler-y::after {
    content: "";
    position: absolute;
    left: 4px;
    top: 213px;
    width: 42px;
    height: 2px;
    background-color: #000;
}
.canvas {
    display: flex;
    padding: 17px 85px 0 40px;
    overflow: hidden;
    background: linear-gradient(#b4cff6 0, #a6c1ee 25%, #8fb0e2 38%, #6c93cc 65%, #5f88c4 80%, #6089c8 100%);
}
.page {
    flex: 1;
    border: 2px solid #000;
    border-bottom: none;
    box-shadow: 4px 4px 0 #000;
    background-color: #fff;
}
.chart {
    width: 100%;
    border-bottom: 2px solid #d4d4d4;
    font-family: 'Liberation Sans', Arial, sans-serif;
    font-size: 20px;
}
.chart-title {
    font-size: 21px;
    font-weight: bold;
    text-anchor: middle;
}
.grid {
    stroke: #e0e0e0;
    stroke-width: 2;
}
.axis {
    fill: none;
    stroke: #222;
    stroke-width: 2;
}
.line-price,
.line-avg {
    fill: none;
    stroke: #6a9ff4;
    stroke-width: 2;
}
.line-avg {
    stroke: #f8c068;
}
.labels-y {
    text-anchor: end;
}
.labels-x {
    text-anchor: middle;
}
.axis-title {
    font-size: 16px;
    text-anchor: middle;
}
.legend {
    font-size: 16px;
}
.tablix {
    margin: 7px 0 0 467px;
    border-collapse: collapse;
    font-family: 'Liberation Sans', Arial, sans-serif;
    font-size: 19px;
}
.tablix th,
.tablix td {
    width: 142px;
    height: 34px;
    padding: 0 3px;
    border: 2px solid #d3d3d8;
    font-weight: normal;
    line-height: 30px;
    text-align: left;
}
.tablix th {
    background-color: #b7c7e6;
}
.tablix .current {
    background-color: #b2dbec;
}
.scrollbar {
    display: flex;
    flex-direction: column;
}
.scrollbar button,
.thumb {
    border: 2px solid;
    border-color: #f4f4f0 #505050 #505050 #f4f4f0;
    background-color: #d4d0c8;
}
.scrollbar button {
    height: 31px;
    line-height: 20px;
}
.scrollbar .arrow {
    margin-bottom: 3px;
}
.track {
    flex: 1;
    padding-top: 21px;
    background: repeating-conic-gradient(#fff 0 25%, #d4d0c8 0 50%) 0 0 / 4px 4px;
}
.thumb {
    height: 82%;
}

/* grouping panes */
.groups {
    display: flex;
    gap: 7px;
    border-top: 2px solid #dcebff;
}
.group-pane {
    flex: 1;
}
.pane-title {
    display: flex;
    align-items: center;
    gap: 18px;
    height: 50px;
    padding: 8px 12px 0 6px;
}
.pane-title button {
    margin-left: auto;
}
.pane-title svg {
    margin-bottom: 5px;
}
.pane-box {
    height: 243px;
    margin-left: 2px;
    padding: 3px 0;
    border: 3px solid #555;
    border-right: 2px solid #d4d0c8;
    border-bottom: 2px solid #d4d0c8;
    background-color: #fff;
}
.details {
    display: flex;
    align-items: center;
    gap: 5px;
    height: 34px;
    padding-left: 4px;
    border: 2px solid #fabe6c;
    border-radius: 3px;
    background: linear-gradient(#fffdf4, #ffe9a6);
}
.details button {
    width: 38px;
    height: 30px;
    margin-left: auto;
    border-left: 2px solid #fabe6c;
}
.details .arrow {
    margin-bottom: 2px;
}

/* status bar */
.status {
    display: flex;
    height: 46px;
    margin: 0 11px 6px;
    border: 2px solid #6a88c0;
    border-bottom-color: #8c98b0;
}
.status-server {
    flex: 7;
    display: flex;
    align-items: center;
    padding-left: 9px;
    border-right: 2px solid #e4eeff;
    background: linear-gradient(#e4effe 0, #d4e4fd 35%, #bcd2f8 40%, #cfe0fc 75%, #e0eafe 100%);
    white-space: nowrap;
}
.status-server span {
    margin-left: 5px;
}
.status-server a {
    margin-left: 26px;
    color: #0000ee;
}
.status-zoom {
    flex: 5;
    display: flex;
    align-items: center;
    padding-left: 9px;
    background: linear-gradient(#b8d4fc 0, #a4c4f6 34%, #8caee8 38%, #7c9fd4 85%, #a0b4dc 100%);
}
.views {
    display: flex;
    border: 1px solid #7c9cd4;
}
.views button {
    width: 38px;
    height: 34px;
    padding: 0 6px;
    background-color: #a8c4f0;
}
.views .active {
    background: linear-gradient(#fcc468, #ffe49c);
}
.status-zoom label {
    margin: 0 21px 0 20px;
}
.status-zoom input {
    appearance: none;
    width: 208px;
    height: 34px;
    margin: 0 4px;
    background: linear-gradient(#e4ecfc, #e4ecfc) center / 100% 3px no-repeat, linear-gradient(#e4ecfc, #e4ecfc) center / 2px 14px no-repeat;
}
.status-zoom input::-webkit-slider-thumb {
    appearance: none;
    width: 20px;
    height: 28px;
    background: url("data:image/svg+xml,%3Csvg xmlns='http://www.w3.org/2000/svg' viewBox='0 0 20 28'%3E%3Cpath d='M2 2h16v16l-8 8-8-8z' fill='%23dfe6f4' stroke='%234c6490' stroke-width='2'/%3E%3Cpath d='M10 7v11' stroke='%238898b8' stroke-width='2'/%3E%3C/svg%3E") no-repeat;
}
```
